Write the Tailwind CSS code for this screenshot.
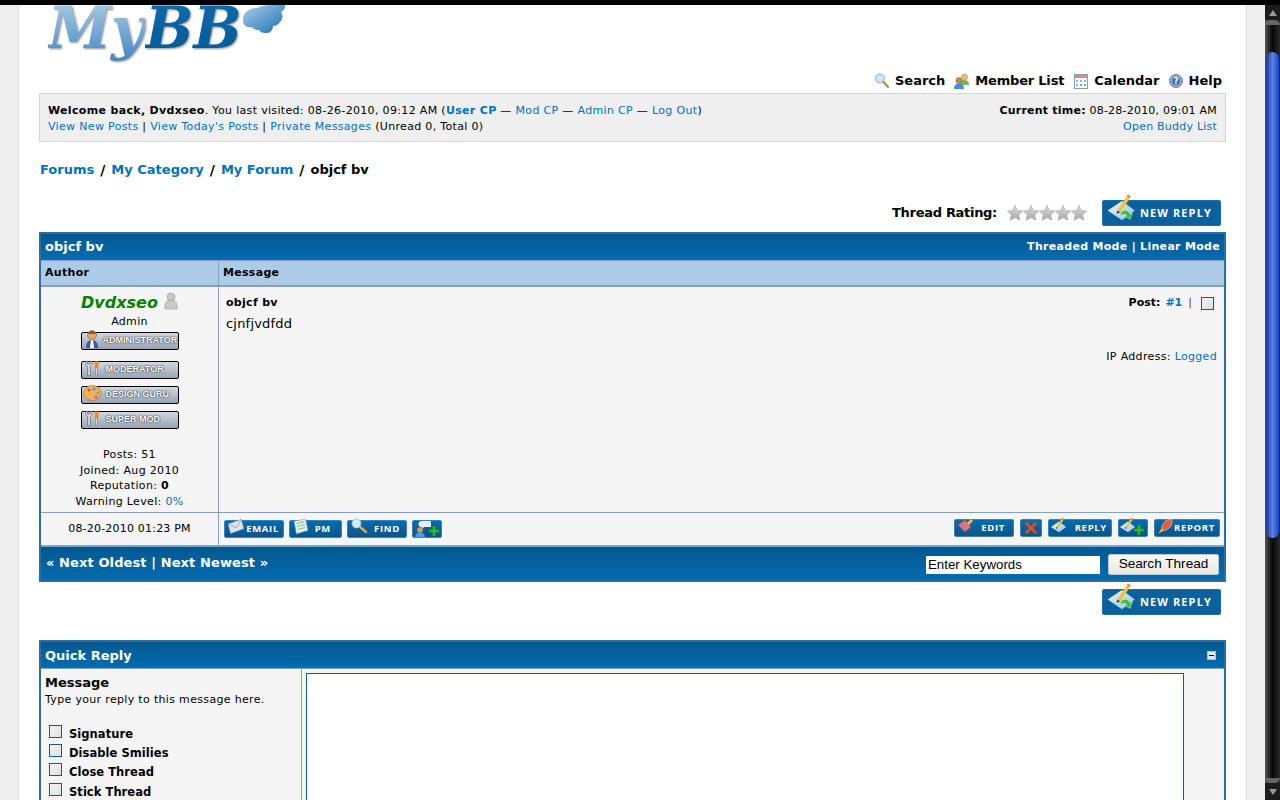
<!DOCTYPE html>
<html><head><meta charset="utf-8"><script src="https://cdn.jsdelivr.net/npm/@tailwindcss/browser@4"></script><title>objcf bv</title></head>
<body class="m-0 overflow-hidden bg-[#efefef]">
<svg width="0" height="0" class="absolute">
<defs>
<linearGradient id="paper" x1="0" y1="0" x2="1" y2="1"><stop offset="0" stop-color="#f0f7fd"/><stop offset="1" stop-color="#8fc0ec"/></linearGradient>
<linearGradient id="cloud" x1="0" y1="0" x2="1" y2="1"><stop offset="0" stop-color="#a9cfea"/><stop offset="1" stop-color="#1a6fb2"/></linearGradient>
<linearGradient id="star" x1="0" y1="0" x2="0" y2="1"><stop offset="0" stop-color="#dcdcdc"/><stop offset="1" stop-color="#a8a8a8"/></linearGradient>
<symbol id="pencilpaper" viewBox="0 0 20 20"><path d="M1 11 10 5l8 6-8 6z" fill="url(#paper)"/><path d="M7 11 13 2l2 1.200-6 9z" fill="#f4c430"/><path d="M13 2l.6-1.200L15.400 2l-.4 1.200z" fill="#e87a3a"/><path d="M7 11l2 1.200-2.400.8z" fill="#444"/></symbol>
<symbol id="plus" viewBox="0 0 10 10"><path d="M3.500 0h3v3.500H10v3H6.500V10h-3V6.500H0v-3h3.500z" fill="#2eb82e" stroke="#0d6e0d" stroke-width=".4"/></symbol>
<symbol id="wrench" viewBox="0 0 20 18"><path d="M2 1v4l2 2v10h3V7l2-2V1L7 1v3H4V1z" fill="#d9dde2" stroke="#555" stroke-width=".7"/><path d="M12 1h4v7h-4z" fill="#f08a1d"/><path d="M13 8h2v9h-2z" fill="#e6e6e6" stroke="#555" stroke-width=".5"/></symbol>
</defs>
</svg>
<div class="w-[1280px] h-[800px] overflow-hidden flex flex-col font-['DejaVu_Sans',sans-serif] text-[11px] tracking-[0.33px] text-black">
  <div class="h-[5px] bg-black shrink-0"></div>
  <div class="flex flex-1 min-h-0">
    <div class="w-[18px] bg-[#efefef] border-r border-[#e0e0e0] box-content shrink-0"></div>
    <div class="w-[1227px] bg-white shrink-0 pl-[20px] overflow-hidden">
      <div class="w-[1187px]">
        <!-- logo -->
        <div class="h-[60px] overflow-hidden flex items-start pl-[9px]">
          <span class="w-[195px] shrink-0 flex items-start -mt-[19px] font-['DejaVu_Serif',serif] italic font-bold text-[57px] tracking-normal leading-[84px] drop-shadow-[1px_1px_1px_rgba(0,0,0,0.45)]">
            <span class="bg-linear-to-b from-[#c2dcf0] to-[#2c7dbb] bg-clip-text text-transparent pr-[1px]">My</span><span class="bg-linear-to-b from-[#0e6fb0] to-[#04568f] bg-clip-text text-transparent pr-[2px]">BB</span>
          </span>
          <svg width="44" height="30" viewBox="0 0 44 30" class="shrink-0 -ml-[1px]"><path d="M1 16C0 9 6 3 15 3c4-2 9-3 13-3h15c1 3-2 6-4 7 2 3 2 7-1 10-2 3-5 4-7 4 0 4-3 8-8 7-3 0-5-1-6-3-3 0-6-1-7-3-4 1-9-1-9-6z" fill="url(#cloud)"/></svg>
        </div>
        <!-- top links -->
        <div class="h-[28px] flex items-end justify-end gap-[9px] pr-[4px] pb-[4px] text-[13px] tracking-normal font-bold leading-[16px]">
          <span class="flex items-center gap-[5px]"><svg width="16" height="16" viewBox="0 0 16 16"><circle cx="6" cy="5.500" r="4.500" fill="#cfe3f6" stroke="#8fb0cf"/><path d="M9.500 9 14 14" stroke="#b9904f" stroke-width="2.400" stroke-linecap="round"/></svg>Search</span>
          <span class="flex items-center gap-[5px] tracking-[-0.2px] mr-[1px]"><svg width="16" height="16" viewBox="0 0 16 16"><circle cx="10.500" cy="4" r="3" fill="#f0c070" stroke="#b5822e" stroke-width=".5"/><path d="M6 12c0-4 2-5 4.500-5s4.500 1 4.500 4v1z" fill="#7db54a"/><circle cx="5" cy="7.500" r="3" fill="#c98a52" stroke="#7b4d22" stroke-width=".5"/><path d="M0 16c0-4 2-5.500 5-5.500S10 12 10 16z" fill="#3f8fdc"/></svg>Member List</span>
          <span class="flex items-center gap-[6px]"><svg width="14" height="15" viewBox="0 0 14 15"><rect x=".5" y=".5" width="13" height="14" fill="#f4f8fc" stroke="#7f9fc4"/><rect x="1" y="1" width="12" height="3" fill="#e58a7a"/><path d="M2 6h2v2H2zM6 6h2v2H6zM10 6h2v2h-2zM2 10h2v2H2z" fill="#8fb9e4"/><path d="M6 10h2v2H6zM10 10h2v2h-2z" fill="#7db54a"/></svg>Calendar</span>
          <span class="flex items-center gap-[6px]"><svg width="14" height="14" viewBox="0 0 14 14"><circle cx="7" cy="7" r="6.500" fill="#8fabd6" stroke="#5f7fb0"/><circle cx="7" cy="7" r="4" fill="#4a6fb0"/><text x="7" y="10" text-anchor="middle" font-size="8" font-weight="700" fill="#fff" font-family="DejaVu Sans">?</text></svg>Help</span>
        </div>
        <!-- welcome panel -->
        <div class="h-[49px] border border-[#d4d4d4] bg-[#efefef] flex justify-between pt-[9px] pl-[8px] pr-[8px] leading-[16px]">
          <div>
            <div><b>Welcome back, Dvdxseo</b>. You last visited: 08-26-2010, 09:12 AM (<b class="text-[#0072bc]">User CP</b> — <span class="text-[#0072bc]">Mod CP</span> — <span class="text-[#0072bc]">Admin CP</span> — <span class="text-[#0072bc]">Log Out</span>)</div>
            <div><span class="text-[#0072bc]">View New Posts</span> | <span class="text-[#0072bc]">View Today's Posts</span> | <span class="text-[#0072bc]">Private Messages</span> (Unread 0, Total 0)</div>
          </div>
          <div class="text-right tracking-[0.22px]">
            <div><b>Current time:</b> 08-28-2010, 09:01 AM</div>
            <div class="text-[#0072bc]">Open Buddy List</div>
          </div>
        </div>
        <!-- breadcrumb -->
        <div class="mt-[20px] h-[16px] leading-[16px] text-[13px] tracking-normal font-bold flex items-center pl-[1px]"><span class="text-[#0072bc]">Forums</span><span class="px-[6px] text-[14px]">/</span><span class="text-[#0072bc]">My Category</span><span class="px-[6px] text-[14px]">/</span><span class="text-[#0072bc]">My Forum</span><span class="px-[6px] text-[14px]">/</span><span>objcf bv</span></div>
        <!-- rating row -->
        <div class="mt-[22px] h-[26px] flex items-center justify-end pr-[5px]">
          <span class="text-[13px] tracking-[-0.3px] font-bold mr-[10px]">Thread Rating:</span>
          <svg width="80" height="16" viewBox="0 0 80 16" class="mr-[15px]">
            <g fill="url(#star)" stroke="#a3a3a3" stroke-width=".6"><path d="M8 .5l2.300 5 5.400.6-4 3.700 1.100 5.400L8 12.500l-4.800 2.700 1.100-5.400-4-3.700 5.400-.6z"/><path transform="translate(16)" d="M8 .5l2.300 5 5.400.6-4 3.700 1.100 5.400L8 12.500l-4.800 2.700 1.100-5.400-4-3.700 5.400-.6z"/><path transform="translate(32)" d="M8 .5l2.300 5 5.400.6-4 3.700 1.100 5.400L8 12.500l-4.800 2.700 1.100-5.400-4-3.700 5.400-.6z"/><path transform="translate(48)" d="M8 .5l2.300 5 5.400.6-4 3.700 1.100 5.400L8 12.500l-4.800 2.700 1.100-5.400-4-3.700 5.400-.6z"/><path transform="translate(64)" d="M8 .5l2.300 5 5.400.6-4 3.700 1.100 5.400L8 12.500l-4.800 2.700 1.100-5.400-4-3.700 5.400-.6z"/></g>
          </svg>
          <span class="w-[119px] h-[26px] rounded-[2px] bg-[#0c609c] border border-[#1a6fa8] flex items-center pl-[2px] text-white font-['Open_Sans',sans-serif] font-bold text-[11px] tracking-[1.100px] whitespace-nowrap">
            <svg width="34" height="32" viewBox="0 0 20 20" class="-mt-[8px] shrink-0"><use href="#pencilpaper"/><path d="M9 13c1-3 5-3 6 0l1.500-.5-1.500 4-3.500-2 1.300-.5c-.8-1-2-1-3 0z" fill="#3fbe3f" stroke="#e6ffe6" stroke-width=".3"/></svg><span class="ml-[1px]">NEW REPLY</span>
          </span>
        </div>
        <!-- thread table -->
        <div class="mt-[6px] h-[350px] border-2 border-[#2a6ea3] flex flex-col bg-[#81a2c4]">
          <div class="h-[26px] shrink-0 bg-linear-to-b from-[#04588f] to-[#026cb1] flex items-center justify-between px-[4px] text-white font-bold border-b border-[#81a2c4] box-content">
            <span class="text-[13px] tracking-normal">objcf bv</span>
            <span class="text-[11px] tracking-[0.3px]">Threaded Mode | Linear Mode</span>
          </div>
          <div class="h-[24px] shrink-0 bg-[#adcbe7] border-b-2 border-[#81a2c4] box-content flex items-center font-bold text-[11px] tracking-[0.3px]">
            <span class="w-[178px] pl-[4px] border-r border-[#81a2c4] h-full flex items-center shrink-0">Author</span><span class="pl-[4px]">Message</span>
          </div>
          <div class="h-[225px] shrink-0 flex bg-[#f5f5f5] border-b border-[#81a2c4] box-content">
            <div class="w-[178px] shrink-0 border-r border-[#81a2c4] flex flex-col items-center pt-[6px]">
              <div class="flex items-start h-[20px]"><span class="text-[#008000] italic font-bold text-[16px] tracking-normal leading-[20px]">Dvdxseo</span><svg width="14" height="18" viewBox="0 0 14 18" class="ml-[6px] -mt-[1px]"><circle cx="7" cy="5" r="4" fill="#c9c9c9" stroke="#999" stroke-width=".6"/><path d="M1 17c-1-6 2-9 6-9s7 3 6 9z" fill="#c9c9c9" stroke="#999" stroke-width=".6"/></svg></div>
              <div class="mt-[1px] h-[16px] leading-[16px]">Admin</div>
              <div class="mt-[2px] w-[98px] h-[18px] shrink-0 rounded-[2px] border border-black bg-linear-to-b from-[#d2d8e0] to-[#98a4b4] flex items-center text-white font-['Liberation_Sans',sans-serif] font-bold text-[9px] tracking-normal [text-shadow:0_0_1px_#222,0_0_2px_#333] whitespace-nowrap"><svg width="14" height="19" viewBox="0 0 14 19" class="ml-[3px] -mt-[4px] shrink-0"><circle cx="7" cy="5" r="4.500" fill="#e5a662" stroke="#7b4d22" stroke-width=".5"/><path d="M3 4c0-4 8-4 8 0z" fill="#8b5a2b"/><path d="M1 18c0-6 3-8 6-8s6 2 6 8z" fill="#3e5c9a"/><path d="M6 10h2l1 8H5z" fill="#fff"/></svg><span class="ml-[4px]">ADMINISTRATOR</span></div>
              <div class="mt-[11px] w-[98px] h-[18px] shrink-0 rounded-[2px] border border-black bg-linear-to-b from-[#d2d8e0] to-[#98a4b4] flex items-center text-white font-['Liberation_Sans',sans-serif] font-bold text-[9px] tracking-normal [text-shadow:0_0_1px_#222,0_0_2px_#333] whitespace-nowrap"><svg width="18" height="19" class="ml-[2px] -mt-[4px] shrink-0"><use href="#wrench"/></svg><span class="ml-[4px]">MODERATOR</span></div>
              <div class="mt-[7px] w-[98px] h-[18px] shrink-0 rounded-[2px] border border-black bg-linear-to-b from-[#d2d8e0] to-[#98a4b4] flex items-center text-white font-['Liberation_Sans',sans-serif] font-bold text-[9px] tracking-normal [text-shadow:0_0_1px_#222,0_0_2px_#333] whitespace-nowrap"><svg width="19" height="17" viewBox="0 0 19 17" class="ml-[1px] -mt-[3px] shrink-0"><ellipse cx="9.500" cy="8" rx="9" ry="7.500" fill="#f0b060" stroke="#a8702a" stroke-width=".6"/><circle cx="6" cy="5" r="1.500" fill="#d94b4b"/><circle cx="11" cy="4" r="1.500" fill="#4b8fd9"/><circle cx="15" cy="8" r="1.500" fill="#5cc05c"/><circle cx="13" cy="12" r="1.500" fill="#d94bc0"/></svg><span class="ml-[4px]">DESIGN GURU</span></div>
              <div class="mt-[7px] w-[98px] h-[18px] shrink-0 rounded-[2px] border border-black bg-linear-to-b from-[#d2d8e0] to-[#98a4b4] flex items-center text-white font-['Liberation_Sans',sans-serif] font-bold text-[9px] tracking-normal [text-shadow:0_0_1px_#222,0_0_2px_#333] whitespace-nowrap"><svg width="18" height="19" class="ml-[2px] -mt-[4px] shrink-0"><use href="#wrench"/></svg><span class="ml-[4px]">SUPER MOD</span></div>
              <div class="mt-[18px] text-center leading-[15.600px]">
                <div>Posts: 51</div><div>Joined: Aug 2010</div><div>Reputation: <b>0</b></div><div>Warning Level: <span class="text-[#0072bc]">0%</span></div>
              </div>
            </div>
            <div class="flex-1 flex flex-col pl-[7px] pr-[7px] pt-[8px]">
              <div class="flex justify-between h-[16px] leading-[16px]">
                <b class="tracking-[0.3px]">objcf bv</b>
                <span class="flex items-center mr-[3px] tracking-normal"><b>Post:</b><span class="ml-[5px] text-[#0072bc] font-bold">#1</span><span class="ml-[6px] text-[#7a1a7a]">|</span><span class="ml-[9px] w-[13px] h-[13px] border border-[#0f5c8e] bg-linear-to-br from-[#f5f5f5] to-[#dedede]"></span></span>
              </div>
              <div class="mt-[5px] text-[13px] tracking-[0.2px] leading-[16px]">cjnfjvdfdd</div>
              <div class="mt-[17px] text-right leading-[16px]">IP Address: <span class="text-[#0072bc]">Logged</span></div>
            </div>
          </div>
          <div class="h-[32px] shrink-0 flex bg-[#f5f5f5] border-b border-[#81a2c4] box-content">
            <div class="w-[178px] shrink-0 border-r border-[#81a2c4] flex items-center justify-center tracking-[0.2px]">08-20-2010 01:23 PM</div>
            <div class="flex-1 flex justify-between pl-[5px] pr-[4px] text-white font-['Open_Sans',sans-serif] font-bold text-[9.500px] tracking-[0.7px]">
              <div class="flex gap-[5px] pt-[7px]">
                <span class="w-[60px] h-[18px] rounded-[2px] bg-linear-to-b from-[#026cb1] to-[#0a5588] border border-[#3a82b8] flex items-center justify-end pr-[4px] relative"><svg width="18" height="16" viewBox="0 0 15 13" class="absolute left-[2px] -top-[2px]"><path d="M1 4 12 0l2 8-11 4z" fill="#dfe3ee" stroke="#8c96ad" stroke-width=".5"/><path d="M1 4l7 3 4-7" fill="none" stroke="#8c96ad" stroke-width=".6"/></svg>EMAIL</span>
                <span class="w-[53px] h-[18px] rounded-[2px] bg-linear-to-b from-[#026cb1] to-[#0a5588] border border-[#3a82b8] flex items-center justify-end pr-[10px] relative"><svg width="16" height="16" viewBox="0 0 14 14" class="absolute left-[3px] -top-[2px]"><path d="M1 2 11 0l2 10-10 3z" fill="#e4f0f8" stroke="#7fa8c8" stroke-width=".5"/><path d="M3 4l7-1.500M3.500 6.500l7-1.500M4 9l7-1.500" stroke="#7db54a" stroke-width=".7"/></svg>PM</span>
                <span class="w-[60px] h-[18px] rounded-[2px] bg-linear-to-b from-[#026cb1] to-[#0a5588] border border-[#3a82b8] flex items-center justify-end pr-[6px] relative"><svg width="18" height="16" viewBox="0 0 18 16" class="absolute left-[2px] -top-[3px]"><circle cx="6.500" cy="5.500" r="4.500" fill="#d6e9fa" stroke="#9fc2e0"/><path d="M10 9l6 5" stroke="#e2a64d" stroke-width="2.400" stroke-linecap="round"/></svg>FIND</span>
                <span class="w-[30px] h-[18px] rounded-[2px] bg-linear-to-b from-[#026cb1] to-[#0a5588] border border-[#3a82b8] relative"><svg width="16" height="16" viewBox="0 0 16 16" class="absolute left-[2px] top-0"><path d="M6 0h8a2 2 0 0 1 0 6H9L7 8V6a3 3 0 0 1-1-6z" fill="#e6edf5"/><circle cx="5" cy="9" r="2.800" fill="#d99a5c"/><path d="M0 16c0-3 2-4.500 5-4.500s5 1.500 5 4.500z" fill="#4a9be0"/></svg><svg width="10" height="10" class="absolute right-[2px] bottom-[1px]"><use href="#plus"/></svg></span>
              </div>
              <div class="flex pt-[6px]">
                <span class="w-[60px] h-[18px] rounded-[2px] bg-linear-to-b from-[#026cb1] to-[#0a5588] border border-[#3a82b8] flex items-center justify-end pr-[8px] relative"><svg width="18" height="16" viewBox="0 0 18 16" class="absolute left-[2px] -top-[2px]"><path d="M1 7 8 2l6 7-6 5z" fill="#e0717f" stroke="#a83c4c" stroke-width=".5"/><path d="M10 5l4-4 2 2-4 4z" fill="#f4c430"/></svg>EDIT</span>
                <span class="ml-[6px] w-[22px] h-[18px] rounded-[2px] bg-linear-to-b from-[#026cb1] to-[#0a5588] border border-[#3a82b8] flex items-center justify-center"><svg width="12" height="12" viewBox="0 0 12 12"><path d="M1.500 1.500l9 9M10.500 1.500l-9 9" stroke="#f04a1a" stroke-width="2.600" stroke-linecap="round"/></svg></span>
                <span class="ml-[6px] w-[64px] h-[18px] rounded-[2px] bg-linear-to-b from-[#026cb1] to-[#0a5588] border border-[#3a82b8] flex items-center justify-end pr-[4px] relative"><svg width="18" height="18" class="absolute left-[1px] -top-[3px]"><use href="#pencilpaper"/></svg>REPLY</span>
                <span class="ml-[6px] w-[30px] h-[18px] rounded-[2px] bg-linear-to-b from-[#026cb1] to-[#0a5588] border border-[#3a82b8] relative"><svg width="18" height="18" class="absolute left-0 -top-[3px]"><use href="#pencilpaper"/></svg><svg width="10" height="10" class="absolute right-[3px] bottom-[1px]"><use href="#plus"/></svg></span>
                <span class="ml-[6px] w-[66px] h-[18px] rounded-[2px] bg-linear-to-b from-[#026cb1] to-[#0a5588] border border-[#3a82b8] flex items-center justify-end pr-[4px] relative"><svg width="18" height="18" viewBox="0 0 16 16" class="absolute left-[1px] -top-[2px]"><path d="M14 1c-5 0-8 3-9 8l2 2c5-1 8-4 7-10z" fill="#e85a3a" stroke="#fff" stroke-width=".4"/><path d="M5 9l-3 5 5-3z" fill="#f4c430"/></svg>REPORT</span>
              </div>
            </div>
          </div>
          <div class="flex-1 min-h-0 bg-linear-to-b from-[#04588f] to-[#026cb1] border-t border-[#81a2c4] flex items-start justify-between text-white pl-[5px] pr-[5px]">
            <span class="text-[13px] tracking-[0.1px] font-bold mt-[8px] leading-[16px]">« Next Oldest | Next Newest »</span>
            <span class="flex items-center mt-[7px] tracking-normal">
              <span class="w-[174px] h-[18px] bg-white text-black font-['Liberation_Sans',sans-serif] text-[13.300px] leading-[18px] pl-[2px]">Enter Keywords</span>
              <span class="ml-[8px] w-[111px] h-[21px] rounded-[2px] bg-linear-to-b from-[#fafafa] to-[#e8e8e2] border border-[#b9c9d6] text-black font-['Liberation_Sans',sans-serif] text-[13.600px] flex items-center justify-center">Search Thread</span>
            </span>
          </div>
        </div>
        <!-- bottom button -->
        <div class="mt-[7px] h-[26px] flex justify-end pr-[5px]">
          <span class="w-[119px] h-[26px] rounded-[2px] bg-[#0c609c] border border-[#1a6fa8] flex items-center pl-[2px] text-white font-['Open_Sans',sans-serif] font-bold text-[11px] tracking-[1.100px] whitespace-nowrap">
            <svg width="34" height="32" viewBox="0 0 20 20" class="-mt-[8px] shrink-0"><use href="#pencilpaper"/><path d="M9 13c1-3 5-3 6 0l1.500-.5-1.500 4-3.500-2 1.300-.5c-.8-1-2-1-3 0z" fill="#3fbe3f" stroke="#e6ffe6" stroke-width=".3"/></svg><span class="ml-[1px]">NEW REPLY</span>
          </span>
        </div>
        <!-- quick reply -->
        <div class="mt-[25px] h-[300px] border-2 border-[#2a6ea3] border-b-0 bg-[#f5f5f5] flex flex-col">
          <div class="h-[25px] shrink-0 bg-linear-to-b from-[#04588f] to-[#026cb1] flex items-center justify-between pl-[4px] pr-[4px] pt-[1px] text-white font-bold text-[13px] tracking-normal border-b border-[#81a2c4] box-content">
            <span>Quick Reply</span>
            <span class="w-[9px] h-[9px] mr-[4px] bg-[#e8e8e8] border border-[#bbb] flex items-center justify-center"><span class="w-[5px] h-[1.500px] bg-black"></span></span>
          </div>
          <div class="flex-1 flex">
            <div class="w-[261px] shrink-0 border-r border-[#81a2c4] pl-[4px] pt-[6px]">
              <div class="text-[13px] tracking-normal font-bold leading-[16px]">Message</div>
              <div class="leading-[16px] mt-[1px]">Type your reply to this message here.</div>
              <div class="mt-[17px] font-bold text-[11.500px] tracking-[0.05px]">
                <div class="h-[19px] flex items-start pl-[4px]"><span class="w-[13px] h-[13px] border border-[#0f5c8e] bg-linear-to-br from-[#f5f5f5] to-[#dedede] shrink-0"></span><span class="ml-[7px] mt-[2px] leading-[14px]">Signature</span></div>
                <div class="h-[19px] flex items-start pl-[4px]"><span class="w-[13px] h-[13px] border border-[#0f5c8e] bg-linear-to-br from-[#f5f5f5] to-[#dedede] shrink-0"></span><span class="ml-[7px] mt-[2px] leading-[14px]">Disable Smilies</span></div>
                <div class="h-[20px] flex items-start pl-[4px]"><span class="w-[13px] h-[13px] border border-[#0f5c8e] bg-linear-to-br from-[#f5f5f5] to-[#dedede] shrink-0"></span><span class="ml-[7px] mt-[2px] leading-[14px]">Close Thread</span></div>
                <div class="h-[19px] flex items-start pl-[4px]"><span class="w-[13px] h-[13px] border border-[#0f5c8e] bg-linear-to-br from-[#f5f5f5] to-[#dedede] shrink-0"></span><span class="ml-[7px] mt-[2px] leading-[14px]">Stick Thread</span></div>
              </div>
            </div>
            <div class="flex-1 pl-[4px] pt-[4px]">
              <div class="w-[878px] h-[300px] bg-white border border-[#0f5c8e]"></div>
            </div>
          </div>
        </div>
      </div>
    </div>
    <div class="w-[19px] bg-[#efefef] border-l border-[#dedede] shrink-0"></div>
    <!-- scrollbar -->
    <div class="w-[15px] shrink-0 bg-linear-to-r from-[#555] via-[#080808] to-[#2a2a2a] flex flex-col items-center">
      <div class="h-[15px] w-full bg-[#1c1c1c] flex items-center justify-center shrink-0"><span class="w-0 h-0 border-x-[4px] border-x-transparent border-b-[6px] border-b-[#999]"></span></div>
      <div class="h-[5px] w-full shrink-0 rounded-t-[7px] bg-[#666]"></div>
      <div class="h-[27px] w-full shrink-0"></div>
      <div class="h-[486px] w-[13px] shrink-0 rounded-t-[7px] rounded-b-[7px] bg-linear-to-r from-[#0a3a9a] via-[#5f7ee8] to-[#0c47c4]"></div>
      <div class="flex-1"></div>
      <div class="h-[5px] w-full shrink-0 rounded-b-[7px] bg-[#666]"></div>
      <div class="h-[17px] w-full bg-[#1c1c1c] flex items-center justify-center shrink-0"><span class="w-0 h-0 border-x-[4px] border-x-transparent border-t-[6px] border-t-[#999]"></span></div>
    </div>
  </div>
</div>
</body></html>
